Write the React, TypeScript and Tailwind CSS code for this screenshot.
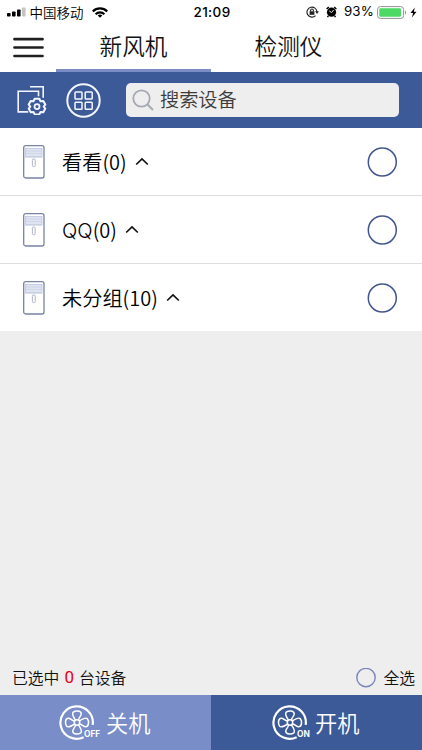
import { ReactNode } from 'react';

interface Group {
  name: string;
  count: number;
}

const groups: Group[] = [
  { name: '看看', count: 0 },
  { name: 'QQ', count: 0 },
  { name: '未分组', count: 10 },
];

function StatusBar() {
  return (
    <div className="grid h-6 grid-cols-3 items-center pl-[7px] pr-[5px] text-black">
      <div className="flex items-center">
        <svg className="h-[10px] w-[19px]" viewBox="0 0 19 10">
          <rect x="0" y="6" width="3.6" height="3.6" rx="0.8" />
          <rect x="5" y="4.5" width="3.6" height="5.1" rx="0.8" />
          <rect x="10" y="2.5" width="3.6" height="7.1" rx="0.8" />
          <rect x="15" y="0.5" width="3.6" height="9.1" rx="0.8" fill="#c4c4c4" />
        </svg>
        <span className="ml-[3.5px] -mt-px whitespace-nowrap text-[13.5px] leading-6">中国移动</span>
        <svg className="ml-2 h-[11px] w-4" viewBox="0 0 16 11" fill="none" stroke="black" strokeWidth="2.1">
          <path d="M0.8 4.4a10.2 10.2 0 0 1 14.4 0" />
          <path d="M3.6 7.2a6.2 6.2 0 0 1 8.8 0" />
          <path d="M8 10.8L5.7 8.6a3.3 3.3 0 0 1 4.6 0z" fill="black" stroke="none" />
        </svg>
      </div>
      <span className="text-center font-[Inter] text-[13.5px] font-medium tracking-[0.35px]">21:09</span>
      <div className="flex items-center justify-end">
        <svg className="h-3 w-[13px] shrink-0" viewBox="0 0 13 12" fill="none" stroke="#222" strokeWidth="1.1">
          <path d="M9.5 9.7A5 5 0 1 1 11 6" />
          <path d="M9.1 5.3h3.8L11 7.9z" fill="#222" stroke="none" />
          <rect x="3.6" y="5.3" width="4.8" height="3.5" fill="#222" stroke="none" />
          <path d="M4.6 5.5V4.4a1.4 1.4 0 0 1 2.8 0v1.1" />
        </svg>
        <svg className="ml-[7px] h-3 w-[11px] shrink-0" viewBox="0 0 11 12" fill="none">
          <circle cx="5.5" cy="6.2" r="4.6" fill="black" />
          <path d="M0.6 3L2.8 1.2M10.4 3L8.2 1.2M2.3 10l-.8 1.2M8.7 10l.8 1.2" stroke="black" strokeWidth="1.5" />
          <path d="M5.6 6.5L3.3 5M5.6 6.5l2-2.5" stroke="white" strokeWidth="0.9" />
        </svg>
        <span className="ml-[7px] font-[Inter] text-[13.3px] font-normal tracking-[0.2px]">93%</span>
        <svg className="ml-[3px] h-[13px] w-[30px] shrink-0" viewBox="0 0 30 13">
          <rect x="0.6" y="0.6" width="26" height="11.8" rx="2.8" fill="white" stroke="#929292" />
          <rect x="2.3" y="2.2" width="21.7" height="8.6" rx="1.2" fill="#4cd964" />
          <path d="M28 4.6c1.5.6 1.5 3.2 0 3.8z" fill="#929292" />
        </svg>
        <svg className="ml-[3px] h-[11px] w-[7px] shrink-0" viewBox="0 0 7 11">
          <path d="M4.8 0.5L0.5 6h2.6L1.9 10.5 6.5 4.7H3.8z" />
        </svg>
      </div>
    </div>
  );
}

function TabBar() {
  return (
    <div className="flex h-12 text-[22.6px] text-[#111]">
      <button className="flex w-14 items-center pl-[13px]" aria-label="menu">
        <svg className="h-6 w-[31px]" viewBox="0 0 31 24" stroke="#202020" strokeWidth="2.7" strokeLinecap="round">
          <path d="M1.5 3.2h28M1.5 11.5h28M1.5 20h28" />
        </svg>
      </button>
      <button className="w-[155px] border-b-[3px] border-[#7c8cc5] pb-[2px] leading-[42px]">新风机</button>
      <button className="w-[155px] border-b-[3px] border-transparent pb-[2px] leading-[42px]">检测仪</button>
    </div>
  );
}

function Toolbar() {
  return (
    <div className="flex h-14 items-center bg-[#3d5a98] pl-[17px]">
      <svg className="h-[30px] w-[30px]" viewBox="0 0 30 30" fill="none" stroke="#f3f6ff" strokeWidth="1.6">
        <path d="M13 1.8h13.2v11M10 6.3H1.2v20.6h10M9.5 6.3h12v5" />
        <path
          d="M17.7 13.7h4.6l1.2 2.5 2.8-.2 2 3.6-1.6 2 1.6 2-2 3.6-2.8-.2-1.2 2.4h-4.6L16.5 27l-2.8.2-2-3.6 1.6-2-1.6-2 2-3.6 2.8.2z"
          fill="#3d5a98"
          strokeWidth="2"
          strokeLinejoin="round"
        />
        <circle cx="20" cy="21.6" r="2.5" strokeWidth="1.8" />
      </svg>
      <svg className="ml-[19px] h-[35px] w-[35px]" viewBox="0 0 35 35" fill="none" stroke="#f3f6ff">
        <circle cx="17.5" cy="17.5" r="16.2" strokeWidth="2" />
        <g strokeWidth="1.5">
          <rect x="9" y="9" width="7" height="7" rx="0.8" />
          <rect x="19.2" y="9" width="7" height="7" rx="0.8" />
          <rect x="9" y="19.2" width="7" height="7" rx="0.8" />
          <rect x="19.2" y="19.2" width="7" height="7" rx="0.8" />
        </g>
      </svg>
      <div className="ml-[25px] flex h-[34px] w-[273px] items-center rounded-[5px] bg-[#eee] pl-[6px]">
        <svg className="h-[22px] w-[22px]" viewBox="0 0 22 22" fill="none" stroke="#a5a9b4" strokeWidth="1.8">
          <circle cx="9.5" cy="9.5" r="8.2" />
          <path d="M15.5 15.5L21 21" strokeWidth="2" />
        </svg>
        <span className="-mt-[2px] ml-[6px] text-[19.2px] leading-[26px] text-[#3c3c3c]">搜索设备</span>
      </div>
    </div>
  );
}

function GroupRow({ name, count }: Group) {
  return (
    <div className="flex flex-1 items-center bg-white pl-[23px] pr-[25px]">
      <svg className="h-[34px] w-[22px]" viewBox="0 0 22 34" fill="none" stroke="#7983a8">
        <rect x="0.7" y="0.7" width="20.3" height="32.3" rx="2" strokeWidth="1.3" />
        <rect x="2.5" y="3.5" width="16.5" height="8" fill="#dfe3f2" stroke="#b8c0dc" strokeWidth="0.7" />
        <path d="M2.5 6h16.5M2.5 8.5h16.5M1 12.5h20" stroke="#c5cce2" strokeWidth="0.6" />
        <rect x="9.4" y="13.8" width="2.8" height="8" rx="1.4" stroke="#a7aec8" strokeWidth="0.9" />
      </svg>
      <span className="ml-[17px] mt-[2px] whitespace-nowrap font-[Inter,'Noto_Sans_CJK_SC',sans-serif] text-[20.2px] leading-7 text-black">
        {name}
        <span className="font-['Noto_Sans_CJK_SC'] text-[20px]">({count})</span>
      </span>
      <svg className="ml-2 h-[9px] w-[14px]" viewBox="0 0 14 9" fill="none" stroke="#111" strokeWidth="1.7">
        <path d="M1.2 7.5L7 2l5.8 5.5" />
      </svg>
      <svg className="ml-auto h-[30px] w-[30px]" viewBox="0 0 30 30" fill="none" stroke="#43558f">
        <circle cx="15.3" cy="15" r="14" strokeWidth="1.5" />
      </svg>
    </div>
  );
}

function FanIcon({ label }: { label: string }) {
  return (
    <svg className="h-[36px] w-[41px]" viewBox="0 0 41 36" fill="none" stroke="white">
      <path d="M33.7 19.8A16.2 16.2 0 1 0 24.7 32.2" strokeWidth="2.2" />
      <g strokeWidth="1.5" strokeLinejoin="round">
        <circle cx="18" cy="17.5" r="2.7" />
        {[0, 90, 180, 270].map((angle) => (
          <path
            key={angle}
            d="M16.5 15.2C14.8 12.6 12.6 8.6 14.2 7.2c2.4-1.9 7.4-1.7 8 1.2.5 2.6-2.4 3.4-2.7 6.6"
            transform={`rotate(${angle} 18 17.5)`}
          />
        ))}
      </g>
      <text x="25" y="31.5" fill="white" stroke="none" fontFamily="Inter, sans-serif" fontSize="8.4" fontWeight="700">
        {label}
      </text>
    </svg>
  );
}

function PowerButton({ className, icon, children }: { className: string; icon: string; children: ReactNode }) {
  return (
    <button className={`flex w-1/2 items-center text-[22.2px] text-white ${className}`}>
      <FanIcon label={icon} />
      {children}
    </button>
  );
}

export default function App() {
  return (
    <div className="flex h-[750px] w-[422px] flex-col overflow-hidden bg-white font-['Noto_Sans_CJK_SC',sans-serif] font-[350]">
      <StatusBar />
      <TabBar />
      <Toolbar />
      <div className="flex h-[203px] flex-col divide-y divide-[#dedede]">
        {groups.map((group) => (
          <GroupRow key={group.name} {...group} />
        ))}
      </div>
      <div className="flex-1 bg-[#eee]" />
      <div className="flex h-[35px] items-center bg-[#eee] pl-3 pr-[7px] text-[15.8px] text-[#111]">
        <span>已选中</span>
        <span className="ml-[5px] mr-[5px] font-[Roboto] text-[17px] font-normal text-[#e60012]">0</span>
        <span>台设备</span>
        <svg className="ml-auto h-5 w-5" viewBox="0 0 20 20" fill="none" stroke="#7785b9">
          <circle cx="10" cy="9.6" r="9.2" strokeWidth="1.4" />
        </svg>
        <span className="ml-[7px]">全选</span>
      </div>
      <div className="flex h-[55px]">
        <PowerButton className="bg-[#798dc8] pl-[59px]" icon="OFF">
          <span className="ml-[6px]">关机</span>
        </PowerButton>
        <PowerButton className="bg-[#3d5a98] pl-[61px]" icon="ON">
          <span className="ml-[2px]">开机</span>
        </PowerButton>
      </div>
    </div>
  );
}
